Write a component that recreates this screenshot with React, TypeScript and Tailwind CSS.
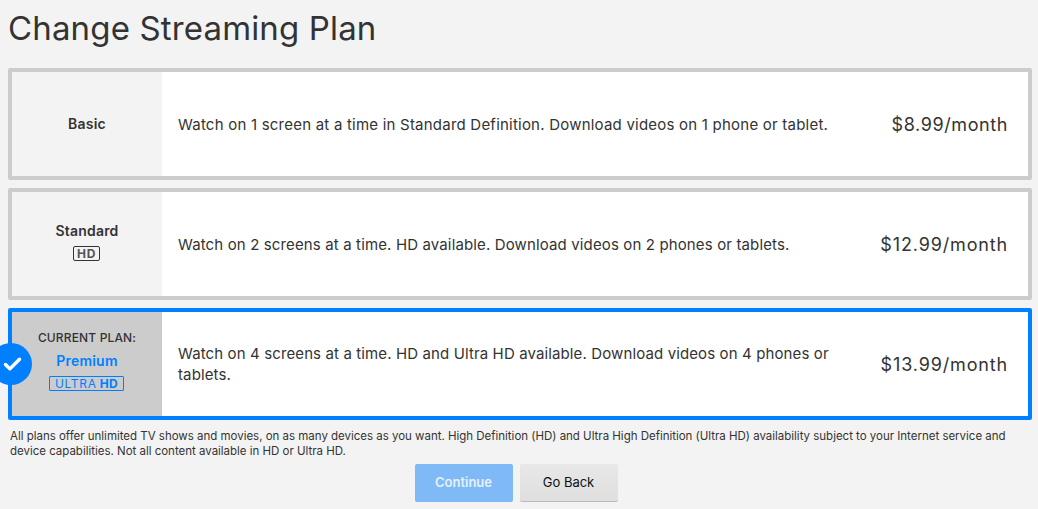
import React from 'react';
import { Check } from 'lucide-react';

type Plan = {
  name: string;
  desc: string;
  descClass: string;
  price: string;
  priceClass: string;
  current?: boolean;
  badge?: string;
};

const plans: Plan[] = [
  {
    name: 'Basic',
    desc: 'Watch on 1 screen at a time in Standard Definition. Download videos on 1 phone or tablet.',
    descClass: 'tracking-[0.22px]',
    price: '$8.99/month',
    priceClass: 'tracking-[0.6px]',
  },
  {
    name: 'Standard',
    desc: 'Watch on 2 screens at a time. HD available. Download videos on 2 phones or tablets.',
    descClass: 'tracking-[0.135px]',
    price: '$12.99/month',
    priceClass: 'tracking-[0.85px]',
    badge: 'hd',
  },
  {
    name: 'Premium',
    desc: 'Watch on 4 screens at a time. HD and Ultra HD available. Download videos on 4 phones or tablets.',
    descClass: 'tracking-[0.12px]',
    price: '$13.99/month',
    priceClass: 'tracking-[0.85px]',
    badge: 'uhd',
    current: true,
  },
];

const PlanCard: React.FC<{ plan: Plan }> = ({ plan }) => {
  return (
    <div
      className={`relative flex h-[112px] rounded-[2px] border-4 bg-white ${
        plan.current ? 'border-[#0080ff]' : 'border-[#cccccc]'
      }`}
    >
      {plan.current && (
        <div className="absolute left-[-12px] top-[31px] flex h-[42px] w-[32px] items-center justify-center overflow-hidden">
          <div className="absolute right-0 h-[42px] w-[42px] rounded-full bg-[#0080ff]" />
          <Check size={21} strokeWidth={4} className="relative mr-[8px] text-white" />
        </div>
      )}
      <div
        className={`flex w-[150px] shrink-0 flex-col items-center justify-center ${
          plan.current ? 'bg-[#cccccc] pb-[7px]' : 'bg-[#f3f3f3]'
        } ${plan.badge === 'hd' ? 'pb-[5px]' : ''}`}
      >
        {plan.current && (
          <div className="mb-[6px] text-[12px] leading-[16px] font-medium tracking-[0.15px] text-[#333333]">
            CURRENT PLAN:
          </div>
        )}
        <div
          className={`text-[14px] leading-[18px] font-semibold tracking-[0.2px] ${
            plan.current ? 'text-[#0080ff]' : 'text-[#333333]'
          }`}
        >
          {plan.name}
        </div>
        {plan.badge === 'hd' && (
          <div className="mt-[6px] mr-[1px] flex h-[15px] w-[27px] items-center justify-center rounded-[2px] border border-[#333333] text-[12px] leading-none font-bold tracking-[0.6px] text-[#555555]">
            HD
          </div>
        )}
        {plan.badge === 'uhd' && (
          <div className="mt-[6px] mr-[1px] flex h-[15px] w-[75px] items-center justify-center gap-[3px] rounded-[1px] border border-[#0080ff] text-[12px] leading-none text-[#0080ff]">
            <span className="tracking-[0.7px]">ULTRA</span>
            <span className="font-bold tracking-[0.4px]">HD</span>
          </div>
        )}
      </div>
      <div className="flex min-w-0 flex-1 items-center pl-4 pr-[20px]">
        <p className={`w-[665px] text-[15px] leading-[21px] text-[#333333] ${plan.descClass}`}>{plan.desc}</p>
        <div className={`ml-auto pt-[1px] text-[18px] whitespace-nowrap text-[#333333] ${plan.priceClass}`}>
          {plan.price}
        </div>
      </div>
    </div>
  );
};

const App: React.FC = () => {
  return (
    <div className="h-[509px] w-[1038px] overflow-hidden bg-[#f3f3f3] px-2 font-['Inter',sans-serif]">
      <h1 className="h-[68px] pt-[7px] text-[33px] leading-[42px] font-normal tracking-[0.15px] text-[#333333]">
        Change Streaming Plan
      </h1>
      <div className="flex w-[1024px] flex-col gap-2">
        {plans.map((plan) => (
          <PlanCard key={plan.name} plan={plan} />
        ))}
      </div>
      <p className="mt-[9px] pl-[2px] text-[11.5px] leading-[15px] tracking-[-0.015px] text-[#333333]">
        All plans offer unlimited TV shows and movies, on as many devices as you want. High Definition (HD) and Ultra
        High Definition (Ultra HD) availability subject to your Internet service and device capabilities. Not all
        content available in HD or Ultra HD.
      </p>
      <div className="mt-[5px] flex justify-center gap-[7px] pr-[6px]">
        <button className="h-[38px] w-[98px] rounded-[2px] bg-[#7fbaf7] text-[13px] font-semibold text-[#e6f1fc]">
          Continue
        </button>
        <button className="h-[38px] w-[98px] rounded-[2px] border-b border-[#bbbbbb] bg-gradient-to-b from-[#e8e8e8] to-[#dfdfdf] text-[13px] font-normal text-[#111111]">
          Go Back
        </button>
      </div>
    </div>
  );
};

export default App;
